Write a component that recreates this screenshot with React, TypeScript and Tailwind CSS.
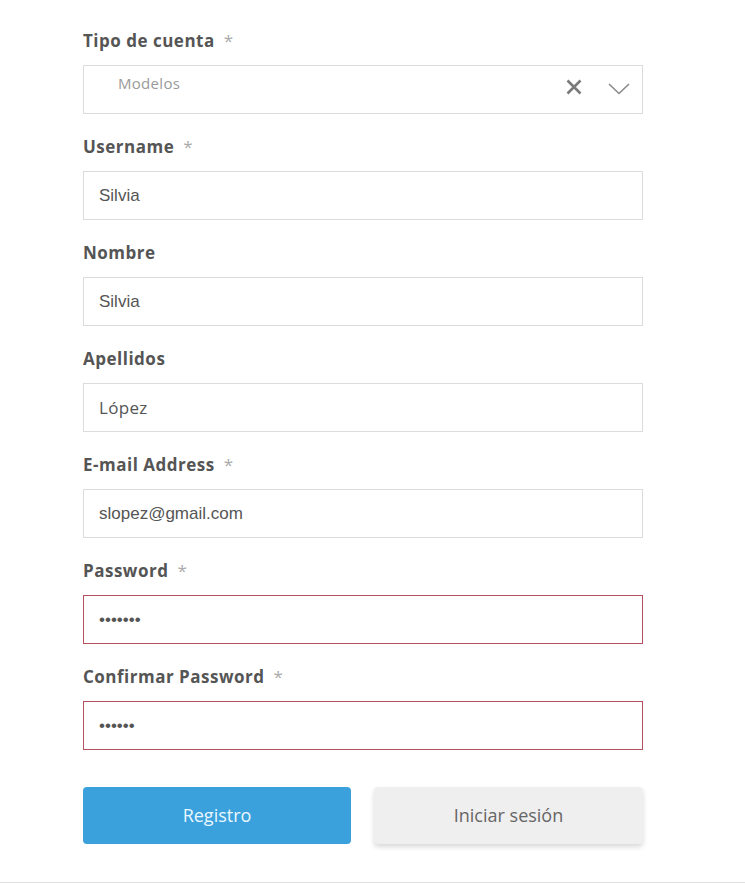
import React from "react";

const labelCls = "text-[17px] leading-[24px] font-bold tracking-[0.5px] text-[#555555] mb-[12px]";
const inputCls = "h-[49px] w-full border border-[#dcdcdc] bg-white px-[15px] text-[17px] text-[#555555] flex items-center";

function Label({ text, req }: { text: string; req?: boolean }) {
  return (
    <div className={labelCls} style={{ fontFamily: '"Open Sans", sans-serif' }}>
      {text}
      {req && <span className="ml-[9px] font-normal text-[#aaaaaa]">*</span>}
    </div>
  );
}

function Field({ label, req, value, error }: { label: string; req?: boolean; value: string; error?: boolean }) {
  return (
    <div>
      <Label text={label} req={req} />
      <div
        className={
          "h-[49px] w-full border bg-white px-[15px] text-[17px] text-[#555555] flex items-center " +
          (error ? "border-[#b5505f]" : "border-[#dcdcdc]")
        }
        style={{ fontFamily: '"Liberation Sans", Arial, sans-serif' }}
      >
        {value}
      </div>
    </div>
  );
}

export default function App() {
  return (
    <div className="w-[745px] h-[883px] bg-white border-b border-[#e0e0e0]" style={{ fontFamily: '"Open Sans", sans-serif' }}>
      <div className="pl-[83px] pr-[102px] pt-[29px] flex flex-col gap-[21px]">
        <div>
          <Label text="Tipo de cuenta" req />
          <div className="h-[49px] w-full border border-[#dcdcdc] bg-white flex items-start pt-[6px] pl-[34px] pr-[12px]">
            <span className="text-[15px] text-[#9a9a9a] flex-1 tracking-[0.3px]" style={{ fontFamily: '"Open Sans", sans-serif' }}>Modelos</span>
            <svg width="18" height="18" viewBox="0 0 18 18" className="mt-[6px] mr-[25px]">
              <path d="M2.5 2.5 L15.5 15.5 M15.5 2.5 L2.5 15.5" stroke="#7a7a7a" strokeWidth="2.6" strokeLinecap="butt" />
            </svg>
            <svg width="22" height="14" viewBox="0 0 22 14" className="mt-[10px]">
              <path d="M1 2 L11 11.5 L21 2" stroke="#8a8a8a" strokeWidth="1.6" fill="none" />
            </svg>
          </div>
        </div>
        <Field label="Username" req value="Silvia" />
        <Field label="Nombre" value="Silvia" />
        <div>
          <Label text="Apellidos" />
          <div className={inputCls + " tracking-[0.3px]"}>López</div>
        </div>
        <Field label="E-mail Address" req value="slopez@gmail.com" />
        <Field label="Password" req value="•••••••" error />
        <Field label="Confirmar Password" req value="••••••" error />
        <div className="flex gap-[23px] mt-[16px]">
          <button className="w-[268px] h-[57px] rounded-[4px] bg-[#3ba1dc] text-[#eaf7ff] text-[18px]" style={{ fontFamily: '"Open Sans", sans-serif' }}>
            Registro
          </button>
          <button className="w-[269px] h-[57px] rounded-[4px] bg-[#efefef] text-[#666666] text-[18px] shadow-[0_3px_5px_rgba(0,0,0,0.15)]" style={{ fontFamily: '"Open Sans", sans-serif' }}>
            Iniciar sesión
          </button>
        </div>
      </div>
    </div>
  );
}
